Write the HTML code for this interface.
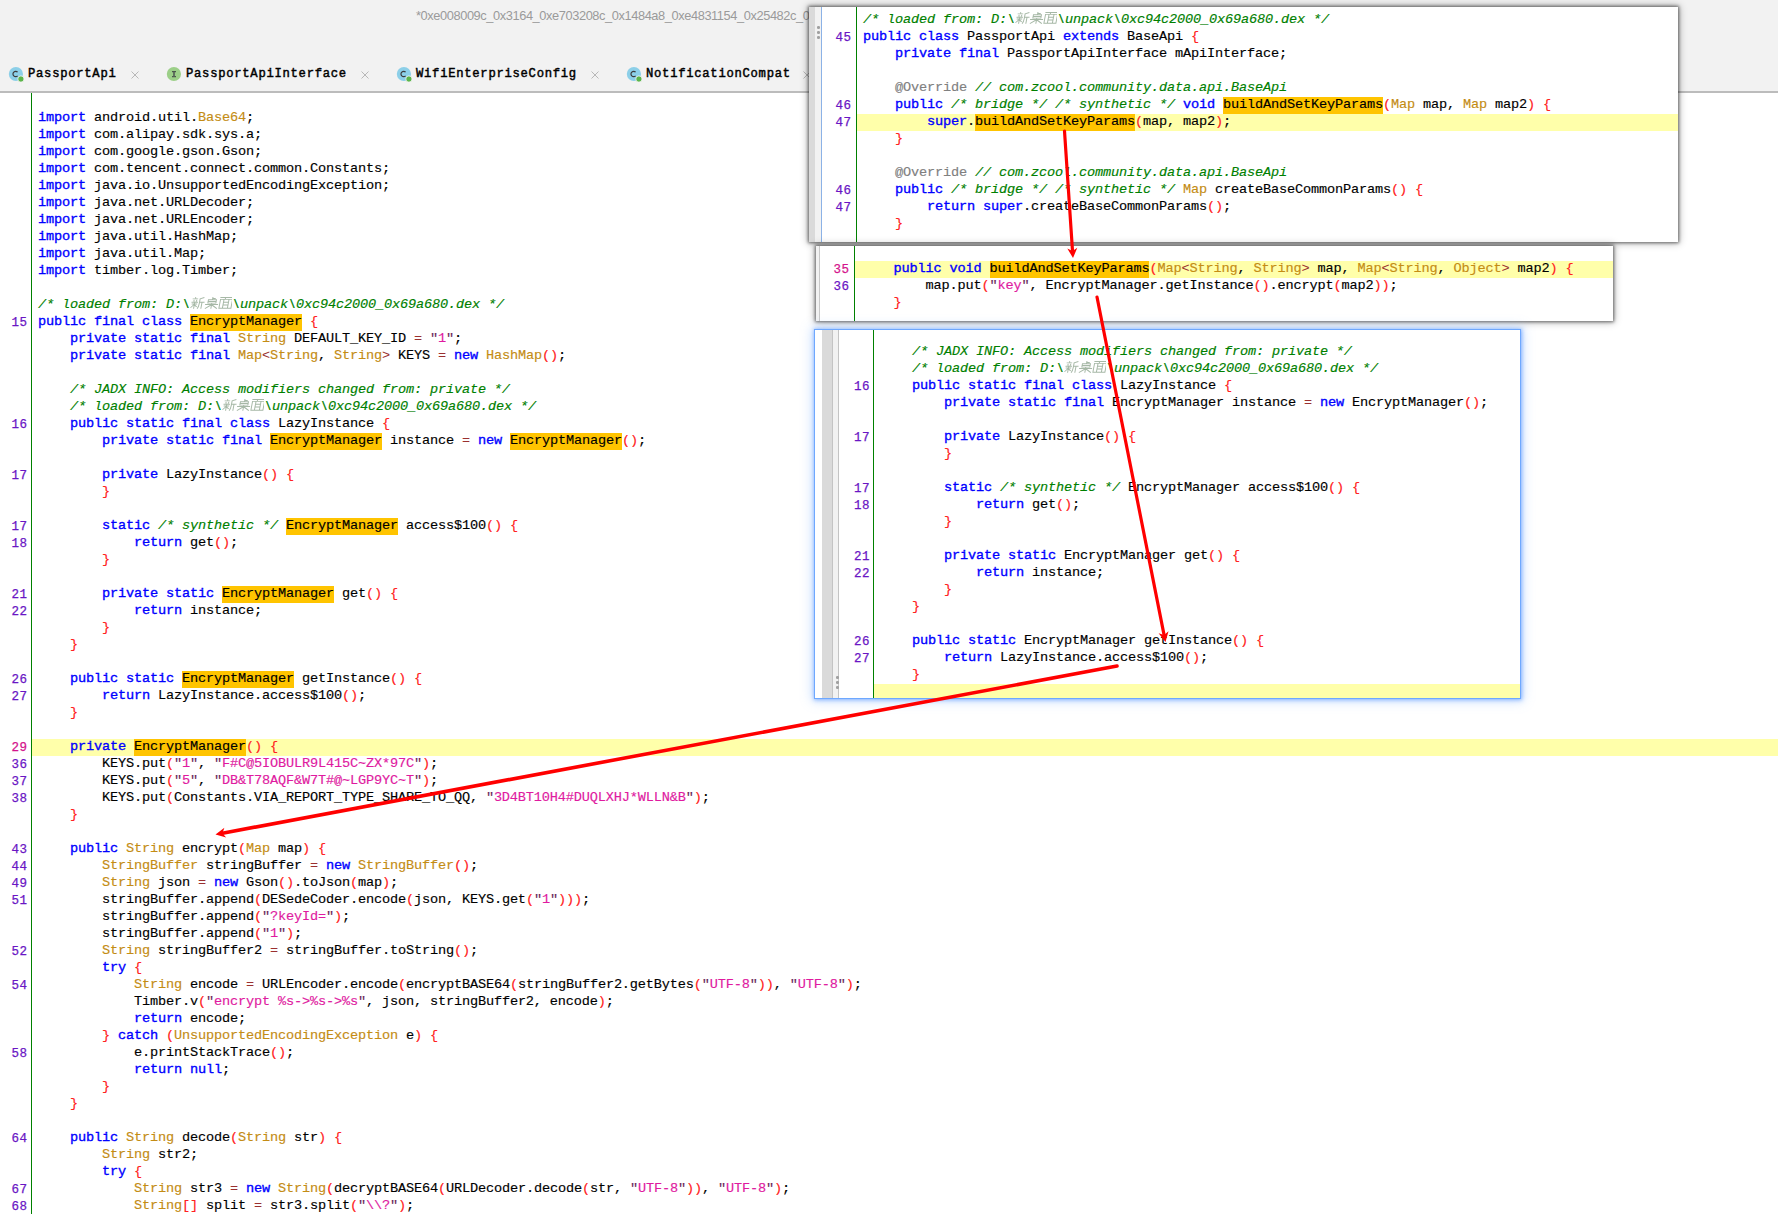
<!DOCTYPE html><html><head><meta charset="utf-8"><style>html,body{margin:0;padding:0;width:1778px;height:1214px;overflow:hidden;background:#fff;position:relative}
body{font-family:"Liberation Mono",monospace;font-size:13.6px;letter-spacing:-0.16px}
#topbar{position:absolute;left:0;top:0;width:1778px;height:91px;background:#f2f2f2}
#title{position:absolute;left:416px;top:8px;font-family:"Liberation Sans",sans-serif;font-size:12.8px;letter-spacing:-0.4px;color:#9a9a9a;white-space:nowrap;line-height:16px}
.ic{position:absolute;top:67px;width:14px;height:14px;border-radius:50%;font-family:"Liberation Sans",sans-serif;font-size:11px;line-height:14px;text-align:center;color:#404040;letter-spacing:0}
.ico{position:absolute;top:66px}
.ici{background:#9ccb8c;font-weight:bold;font-family:"Liberation Serif",serif}
.dot{position:absolute;top:76px;width:6px;height:6px;border-radius:50%;background:#5bb84c}
.tab{position:absolute;top:65.5px;font-size:12.2px;letter-spacing:0.73px;-webkit-text-stroke:0.45px #000;color:#000;line-height:17px;white-space:pre}
.x{position:absolute;top:70.5px;width:8px;height:8px;line-height:0}
#sep{position:absolute;left:0;top:91px;width:1778px;height:2px;background:#bcbcbc}
#main{position:absolute;left:0;top:0;width:1778px;height:1214px}
.code{position:absolute;white-space:pre;color:#000;-webkit-text-stroke:0.15px currentColor}
.ln{position:absolute;left:0;height:17px;line-height:17px;white-space:pre;margin-top:-1px}
.num{position:absolute;width:40px;text-align:right;line-height:17px;color:#6a16c4;-webkit-text-stroke:0.25px currentColor;margin-top:1.3px;margin-left:1.6px;font-size:12.5px;letter-spacing:0.5px}
.num.pk{color:#d4148c}
.k{color:#0000ff;-webkit-text-stroke:0.35px #0000ff}
.t{color:#c48c14}
.s{color:#e01aa0}.q{color:#6a2a5a}
.c{color:#008000;font-style:italic}
.a{color:#808080}.o{color:#9a3030;-webkit-text-stroke:0}
.b{color:#ff2020}
.h{display:inline-block;vertical-align:top;height:18px;background:linear-gradient(#ffc400,#ffc400) 0 1px/100% 17px no-repeat}
.cj{display:inline-block;width:42px;height:17px;vertical-align:top;margin-top:0}
.curline{position:absolute;height:17px;background:#ffffaa}
.gl{position:absolute;width:1px;background:#008000}
.bl{position:absolute;width:1px;background:#8cb2e6}
.pop{position:absolute;background:#fff;overflow:hidden}
.p1,.p2{box-shadow:0 0 3px 1px rgba(0,0,0,0.5),0 0 8px 1px rgba(0,0,0,0.3)}
.p3{overflow:hidden;box-shadow:0 0 0.5px 1px #6ea8ff,0 0 4px 1.5px rgba(110,165,255,0.8),0 0 11px 3px rgba(110,165,255,0.35)}
.strip1{position:absolute;background:#dadada;border-right:1px solid #c4c4c4}
.strip2{position:absolute;background:#f2f2f2;border-right:1px solid #c4c4c4}
.strip2b{position:absolute;background:#f2f2f2;border-right:1px solid #c8c8c8}
.dt{position:absolute;width:2.6px;height:2.6px;border-radius:50%;background:#a0a0a0}
#arrows{position:absolute;left:0;top:0;pointer-events:none}
</style></head><body><div id="topbar"></div>
<div id="title">*0xe008009c_0x3164_0xe703208c_0x1484a8_0xe4831154_0x25482c_0x9a3c_0x1b2</div>
<svg class="ico" style="left:8.0px" width="20" height="20"><circle cx="7.9" cy="8" r="7.1" fill="#8ccfe8"/><path d="M9.6 6.1A2.7 2.7 0 1 0 9.6 9.9" fill="none" stroke="#3c3c3c" stroke-width="1.2"/><circle cx="12.9" cy="13" r="3.1" fill="#5cb54a" stroke="#f2f2f2" stroke-width="0.8"/></svg>
<div class="tab" style="left:28px">PassportApi</div>
<div class="x" style="left:130.5px"><svg width="8" height="8"><path d="M0.5 0.5L7.5 7.5M7.5 0.5L0.5 7.5" stroke="#b8b8b8" stroke-width="1"/></svg></div>
<svg class="ico" style="left:166.0px" width="20" height="20"><circle cx="7.9" cy="8" r="7.1" fill="#9ccf88"/><path d="M6 5.6H10M6 10.6H10M8 5.6V10.6" fill="none" stroke="#4a564a" stroke-width="1.2"/><path d="M8 6V10.4" stroke="#5e6e5e" stroke-width="1.8"/></svg>
<div class="tab" style="left:186px">PassportApiInterface</div>
<div class="x" style="left:360.5px"><svg width="8" height="8"><path d="M0.5 0.5L7.5 7.5M7.5 0.5L0.5 7.5" stroke="#b8b8b8" stroke-width="1"/></svg></div>
<svg class="ico" style="left:396.0px" width="20" height="20"><circle cx="7.9" cy="8" r="7.1" fill="#8ccfe8"/><path d="M9.6 6.1A2.7 2.7 0 1 0 9.6 9.9" fill="none" stroke="#3c3c3c" stroke-width="1.2"/><circle cx="12.9" cy="13" r="3.1" fill="#5cb54a" stroke="#f2f2f2" stroke-width="0.8"/></svg>
<div class="tab" style="left:416px">WifiEnterpriseConfig</div>
<div class="x" style="left:590.5px"><svg width="8" height="8"><path d="M0.5 0.5L7.5 7.5M7.5 0.5L0.5 7.5" stroke="#b8b8b8" stroke-width="1"/></svg></div>
<svg class="ico" style="left:626.0px" width="20" height="20"><circle cx="7.9" cy="8" r="7.1" fill="#8ccfe8"/><path d="M9.6 6.1A2.7 2.7 0 1 0 9.6 9.9" fill="none" stroke="#3c3c3c" stroke-width="1.2"/><circle cx="12.9" cy="13" r="3.1" fill="#5cb54a" stroke="#f2f2f2" stroke-width="0.8"/></svg>
<div class="tab" style="left:646px">NotificationCompat</div>
<div class="x" style="left:802.5px"><svg width="8" height="8"><path d="M0.5 0.5L7.5 7.5M7.5 0.5L0.5 7.5" stroke="#b8b8b8" stroke-width="1"/></svg></div>
<div id="sep"></div>
<div id="main">
<div class="curline" style="left:32px;top:739px;width:1746px"></div>
<div class="gl" style="left:31px;top:93px;height:1121px"></div>
<div class="num" style="top:314px;left:-14px">15</div><div class="num" style="top:416px;left:-14px">16</div><div class="num" style="top:467px;left:-14px">17</div><div class="num" style="top:518px;left:-14px">17</div><div class="num" style="top:535px;left:-14px">18</div><div class="num" style="top:586px;left:-14px">21</div><div class="num" style="top:603px;left:-14px">22</div><div class="num" style="top:671px;left:-14px">26</div><div class="num" style="top:688px;left:-14px">27</div><div class="num pk" style="top:739px;left:-14px">29</div><div class="num" style="top:756px;left:-14px">36</div><div class="num" style="top:773px;left:-14px">37</div><div class="num" style="top:790px;left:-14px">38</div><div class="num" style="top:841px;left:-14px">43</div><div class="num" style="top:858px;left:-14px">44</div><div class="num" style="top:875px;left:-14px">49</div><div class="num" style="top:892px;left:-14px">51</div><div class="num" style="top:943px;left:-14px">52</div><div class="num" style="top:977px;left:-14px">54</div><div class="num" style="top:1045px;left:-14px">58</div><div class="num" style="top:1130px;left:-14px">64</div><div class="num" style="top:1181px;left:-14px">67</div><div class="num" style="top:1198px;left:-14px">68</div>
<div class="code " style="left:38px;top:0"><div class="ln" style="top:110px"><span class="k">import</span> android.util.<span class="t">Base64</span>;</div><div class="ln" style="top:127px"><span class="k">import</span> com.alipay.sdk.sys.a;</div><div class="ln" style="top:144px"><span class="k">import</span> com.google.gson.Gson;</div><div class="ln" style="top:161px"><span class="k">import</span> com.tencent.connect.common.Constants;</div><div class="ln" style="top:178px"><span class="k">import</span> java.io.UnsupportedEncodingException;</div><div class="ln" style="top:195px"><span class="k">import</span> java.net.URLDecoder;</div><div class="ln" style="top:212px"><span class="k">import</span> java.net.URLEncoder;</div><div class="ln" style="top:229px"><span class="k">import</span> java.util.HashMap;</div><div class="ln" style="top:246px"><span class="k">import</span> java.util.Map;</div><div class="ln" style="top:263px"><span class="k">import</span> timber.log.Timber;</div><div class="ln" style="top:297px"><span class="c">/* loaded from: D:\</span><svg class="cj" width="42" height="17" viewBox="0 0 42 17"><g transform="translate(2 1) scale(1 0.94) skewX(-10)" fill="none" stroke="#a6b8a6" stroke-width="1"><path d="M3.5 0.3L4.2 1.5M1 2H6.5M2.5 3L3 5M5.5 3L5 5M0.5 5.5H7M1 7.5H6.5M3.75 5.5V12.5M3.5 8L0.5 11.5M4 8.5L6.5 10.5M12.5 0.5L8.5 2V7Q8.5 10.5 7.3 12.5M8.5 5.5H13.5M11 5.5V12.5"/><path d="M21 0V3M21 1.5H24M17 3H25V6.5H17ZM17 4.75H25M14.5 8H27.5M21 6.5V12.5M20.5 8.5L15 12.3M21.5 8.5L27 12.3"/><path d="M28.5 0.5H41.5M34 0.5L33.5 2.5M29 2.5H41V12H29ZM32.5 2.5V12M37.5 2.5V12M32.5 5.5H37.5M32.5 8.5H37.5"/></g></svg><span class="c">\unpack\0xc94c2000_0x69a680.dex */</span></div><div class="ln" style="top:314px"><span class="k">public</span> <span class="k">final</span> <span class="k">class</span> <span class="h">EncryptManager</span> <span class="b">{</span></div><div class="ln" style="top:331px">    <span class="k">private</span> <span class="k">static</span> <span class="k">final</span> <span class="t">String</span> DEFAULT_KEY_ID <span class="o">=</span> <span class="s"><span class="q">&quot;</span>1<span class="q">&quot;</span></span>;</div><div class="ln" style="top:348px">    <span class="k">private</span> <span class="k">static</span> <span class="k">final</span> <span class="t">Map</span><span class="o">&lt;</span><span class="t">String</span>, <span class="t">String</span><span class="o">&gt;</span> KEYS <span class="o">=</span> <span class="k">new</span> <span class="t">HashMap</span><span class="b">(</span><span class="b">)</span>;</div><div class="ln" style="top:382px">    <span class="c">/* JADX INFO: Access modifiers changed from: private */</span></div><div class="ln" style="top:399px">    <span class="c">/* loaded from: D:\</span><svg class="cj" width="42" height="17" viewBox="0 0 42 17"><g transform="translate(2 1) scale(1 0.94) skewX(-10)" fill="none" stroke="#a6b8a6" stroke-width="1"><path d="M3.5 0.3L4.2 1.5M1 2H6.5M2.5 3L3 5M5.5 3L5 5M0.5 5.5H7M1 7.5H6.5M3.75 5.5V12.5M3.5 8L0.5 11.5M4 8.5L6.5 10.5M12.5 0.5L8.5 2V7Q8.5 10.5 7.3 12.5M8.5 5.5H13.5M11 5.5V12.5"/><path d="M21 0V3M21 1.5H24M17 3H25V6.5H17ZM17 4.75H25M14.5 8H27.5M21 6.5V12.5M20.5 8.5L15 12.3M21.5 8.5L27 12.3"/><path d="M28.5 0.5H41.5M34 0.5L33.5 2.5M29 2.5H41V12H29ZM32.5 2.5V12M37.5 2.5V12M32.5 5.5H37.5M32.5 8.5H37.5"/></g></svg><span class="c">\unpack\0xc94c2000_0x69a680.dex */</span></div><div class="ln" style="top:416px">    <span class="k">public</span> <span class="k">static</span> <span class="k">final</span> <span class="k">class</span> LazyInstance <span class="b">{</span></div><div class="ln" style="top:433px">        <span class="k">private</span> <span class="k">static</span> <span class="k">final</span> <span class="h">EncryptManager</span> instance <span class="o">=</span> <span class="k">new</span> <span class="h">EncryptManager</span><span class="b">(</span><span class="b">)</span>;</div><div class="ln" style="top:467px">        <span class="k">private</span> LazyInstance<span class="b">(</span><span class="b">)</span> <span class="b">{</span></div><div class="ln" style="top:484px">        <span class="b">}</span></div><div class="ln" style="top:518px">        <span class="k">static</span> <span class="c">/* synthetic */</span> <span class="h">EncryptManager</span> access$100<span class="b">(</span><span class="b">)</span> <span class="b">{</span></div><div class="ln" style="top:535px">            <span class="k">return</span> get<span class="b">(</span><span class="b">)</span>;</div><div class="ln" style="top:552px">        <span class="b">}</span></div><div class="ln" style="top:586px">        <span class="k">private</span> <span class="k">static</span> <span class="h">EncryptManager</span> get<span class="b">(</span><span class="b">)</span> <span class="b">{</span></div><div class="ln" style="top:603px">            <span class="k">return</span> instance;</div><div class="ln" style="top:620px">        <span class="b">}</span></div><div class="ln" style="top:637px">    <span class="b">}</span></div><div class="ln" style="top:671px">    <span class="k">public</span> <span class="k">static</span> <span class="h">EncryptManager</span> getInstance<span class="b">(</span><span class="b">)</span> <span class="b">{</span></div><div class="ln" style="top:688px">        <span class="k">return</span> LazyInstance.access$100<span class="b">(</span><span class="b">)</span>;</div><div class="ln" style="top:705px">    <span class="b">}</span></div><div class="ln" style="top:739px">    <span class="k">private</span> <span class="h">EncryptManager</span><span class="b">(</span><span class="b">)</span> <span class="b">{</span></div><div class="ln" style="top:756px">        KEYS.put<span class="b">(</span><span class="s"><span class="q">&quot;</span>1<span class="q">&quot;</span></span>, <span class="s"><span class="q">&quot;</span>F#C@5IOBULR9L415C~ZX*97C<span class="q">&quot;</span></span><span class="b">)</span>;</div><div class="ln" style="top:773px">        KEYS.put<span class="b">(</span><span class="s"><span class="q">&quot;</span>5<span class="q">&quot;</span></span>, <span class="s"><span class="q">&quot;</span>DB&amp;T78AQF&amp;W7T#@~LGP9YC~T<span class="q">&quot;</span></span><span class="b">)</span>;</div><div class="ln" style="top:790px">        KEYS.put<span class="b">(</span>Constants.VIA_REPORT_TYPE_SHARE_TO_QQ, <span class="s"><span class="q">&quot;</span>3D4BT10H4#DUQLXHJ*WLLN&amp;B<span class="q">&quot;</span></span><span class="b">)</span>;</div><div class="ln" style="top:807px">    <span class="b">}</span></div><div class="ln" style="top:841px">    <span class="k">public</span> <span class="t">String</span> encrypt<span class="b">(</span><span class="t">Map</span> map<span class="b">)</span> <span class="b">{</span></div><div class="ln" style="top:858px">        <span class="t">StringBuffer</span> stringBuffer <span class="o">=</span> <span class="k">new</span> <span class="t">StringBuffer</span><span class="b">(</span><span class="b">)</span>;</div><div class="ln" style="top:875px">        <span class="t">String</span> json <span class="o">=</span> <span class="k">new</span> Gson<span class="b">(</span><span class="b">)</span>.toJson<span class="b">(</span>map<span class="b">)</span>;</div><div class="ln" style="top:892px">        stringBuffer.append<span class="b">(</span>DESedeCoder.encode<span class="b">(</span>json, KEYS.get<span class="b">(</span><span class="s"><span class="q">&quot;</span>1<span class="q">&quot;</span></span><span class="b">)</span><span class="b">)</span><span class="b">)</span>;</div><div class="ln" style="top:909px">        stringBuffer.append<span class="b">(</span><span class="s"><span class="q">&quot;</span>?keyId=<span class="q">&quot;</span></span><span class="b">)</span>;</div><div class="ln" style="top:926px">        stringBuffer.append<span class="b">(</span><span class="s"><span class="q">&quot;</span>1<span class="q">&quot;</span></span><span class="b">)</span>;</div><div class="ln" style="top:943px">        <span class="t">String</span> stringBuffer2 <span class="o">=</span> stringBuffer.toString<span class="b">(</span><span class="b">)</span>;</div><div class="ln" style="top:960px">        <span class="k">try</span> <span class="b">{</span></div><div class="ln" style="top:977px">            <span class="t">String</span> encode <span class="o">=</span> URLEncoder.encode<span class="b">(</span>encryptBASE64<span class="b">(</span>stringBuffer2.getBytes<span class="b">(</span><span class="s"><span class="q">&quot;</span>UTF-8<span class="q">&quot;</span></span><span class="b">)</span><span class="b">)</span>, <span class="s"><span class="q">&quot;</span>UTF-8<span class="q">&quot;</span></span><span class="b">)</span>;</div><div class="ln" style="top:994px">            Timber.v<span class="b">(</span><span class="s"><span class="q">&quot;</span>encrypt %s-&gt;%s-&gt;%s<span class="q">&quot;</span></span>, json, stringBuffer2, encode<span class="b">)</span>;</div><div class="ln" style="top:1011px">            <span class="k">return</span> encode;</div><div class="ln" style="top:1028px">        <span class="b">}</span> <span class="k">catch</span> <span class="b">(</span><span class="t">UnsupportedEncodingException</span> e<span class="b">)</span> <span class="b">{</span></div><div class="ln" style="top:1045px">            e.printStackTrace<span class="b">(</span><span class="b">)</span>;</div><div class="ln" style="top:1062px">            <span class="k">return</span> <span class="k">null</span>;</div><div class="ln" style="top:1079px">        <span class="b">}</span></div><div class="ln" style="top:1096px">    <span class="b">}</span></div><div class="ln" style="top:1130px">    <span class="k">public</span> <span class="t">String</span> decode<span class="b">(</span><span class="t">String</span> str<span class="b">)</span> <span class="b">{</span></div><div class="ln" style="top:1147px">        <span class="t">String</span> str2;</div><div class="ln" style="top:1164px">        <span class="k">try</span> <span class="b">{</span></div><div class="ln" style="top:1181px">            <span class="t">String</span> str3 <span class="o">=</span> <span class="k">new</span> <span class="t">String</span><span class="b">(</span>decryptBASE64<span class="b">(</span>URLDecoder.decode<span class="b">(</span>str, <span class="s"><span class="q">&quot;</span>UTF-8<span class="q">&quot;</span></span><span class="b">)</span><span class="b">)</span>, <span class="s"><span class="q">&quot;</span>UTF-8<span class="q">&quot;</span></span><span class="b">)</span>;</div><div class="ln" style="top:1198px">            <span class="t">String</span><span class="b">[</span><span class="b">]</span> split <span class="o">=</span> str3.split<span class="b">(</span><span class="s"><span class="q">&quot;</span>\\?<span class="q">&quot;</span></span><span class="b">)</span>;</div></div>
</div>
<div class="pop p1" style="left:809px;top:7px;width:869px;height:235px">
<div class="strip1" style="left:0;top:0;width:6px;height:235px"></div>
<div class="strip2" style="left:6px;top:0;width:6px;height:235px"></div>
<div class="dt" style="left:8.0px;top:19.0px"></div><div class="dt" style="left:8.0px;top:24.0px"></div><div class="dt" style="left:8.0px;top:29.0px"></div>
<div class="bl" style="left:12px;top:0;height:235px"></div>
<div class="curline" style="left:48px;top:107px;width:821px"></div>
<div class="gl" style="left:47px;top:0;height:235px"></div>
<div class="num" style="top:22px;left:1px">45</div><div class="num" style="top:90px;left:1px">46</div><div class="num" style="top:107px;left:1px">47</div><div class="num" style="top:175px;left:1px">46</div><div class="num" style="top:192px;left:1px">47</div>
<div class="code " style="left:54px;top:0"><div class="ln" style="top:5px"><span class="c">/* loaded from: D:\</span><svg class="cj" width="42" height="17" viewBox="0 0 42 17"><g transform="translate(2 1) scale(1 0.94) skewX(-10)" fill="none" stroke="#a6b8a6" stroke-width="1"><path d="M3.5 0.3L4.2 1.5M1 2H6.5M2.5 3L3 5M5.5 3L5 5M0.5 5.5H7M1 7.5H6.5M3.75 5.5V12.5M3.5 8L0.5 11.5M4 8.5L6.5 10.5M12.5 0.5L8.5 2V7Q8.5 10.5 7.3 12.5M8.5 5.5H13.5M11 5.5V12.5"/><path d="M21 0V3M21 1.5H24M17 3H25V6.5H17ZM17 4.75H25M14.5 8H27.5M21 6.5V12.5M20.5 8.5L15 12.3M21.5 8.5L27 12.3"/><path d="M28.5 0.5H41.5M34 0.5L33.5 2.5M29 2.5H41V12H29ZM32.5 2.5V12M37.5 2.5V12M32.5 5.5H37.5M32.5 8.5H37.5"/></g></svg><span class="c">\unpack\0xc94c2000_0x69a680.dex */</span></div><div class="ln" style="top:22px"><span class="k">public</span> <span class="k">class</span> PassportApi <span class="k">extends</span> BaseApi <span class="b">{</span></div><div class="ln" style="top:39px">    <span class="k">private</span> <span class="k">final</span> PassportApiInterface mApiInterface;</div><div class="ln" style="top:73px">    <span class="a">@Override</span> <span class="c">// com.zcool.community.data.api.BaseApi</span></div><div class="ln" style="top:90px">    <span class="k">public</span> <span class="c">/* bridge */</span> <span class="c">/* synthetic */</span> <span class="k">void</span> <span class="h">buildAndSetKeyParams</span><span class="b">(</span><span class="t">Map</span> map, <span class="t">Map</span> map2<span class="b">)</span> <span class="b">{</span></div><div class="ln" style="top:107px">        <span class="k">super</span>.<span class="h">buildAndSetKeyParams</span><span class="b">(</span>map, map2<span class="b">)</span>;</div><div class="ln" style="top:124px">    <span class="b">}</span></div><div class="ln" style="top:158px">    <span class="a">@Override</span> <span class="c">// com.zcool.community.data.api.BaseApi</span></div><div class="ln" style="top:175px">    <span class="k">public</span> <span class="c">/* bridge */</span> <span class="c">/* synthetic */</span> <span class="t">Map</span> createBaseCommonParams<span class="b">(</span><span class="b">)</span> <span class="b">{</span></div><div class="ln" style="top:192px">        <span class="k">return</span> <span class="k">super</span>.createBaseCommonParams<span class="b">(</span><span class="b">)</span>;</div><div class="ln" style="top:209px">    <span class="b">}</span></div></div>
</div>
<div class="pop p2" style="left:816px;top:246px;width:797px;height:75px">
<div class="strip2b" style="left:0;top:0;width:3px;height:75px"></div>
<div class="curline" style="left:39px;top:15px;width:758px"></div>
<div class="gl" style="left:38px;top:0;height:75px"></div>
<div class="num pk" style="top:15px;left:-8px">35</div><div class="num" style="top:32px;left:-8px">36</div>
<div class="code " style="left:45.5px;top:0"><div class="ln" style="top:15px">    <span class="k">public</span> <span class="k">void</span> <span class="h">buildAndSetKeyParams</span><span class="b">(</span><span class="t">Map</span><span class="o">&lt;</span><span class="t">String</span>, <span class="t">String</span><span class="o">&gt;</span> map, <span class="t">Map</span><span class="o">&lt;</span><span class="t">String</span>, <span class="t">Object</span><span class="o">&gt;</span> map2<span class="b">)</span> <span class="b">{</span></div><div class="ln" style="top:32px">        map.put<span class="b">(</span><span class="s"><span class="q">&quot;</span>key<span class="q">&quot;</span></span>, EncryptManager.getInstance<span class="b">(</span><span class="b">)</span>.encrypt<span class="b">(</span>map2<span class="b">)</span><span class="b">)</span>;</div><div class="ln" style="top:49px">    <span class="b">}</span></div></div>
</div>
<div class="pop p3" style="left:815px;top:330px;width:705px;height:368px"><div style="position:absolute;left:-2px;top:-2px;width:708px;height:370px">
<div class="strip1" style="left:9px;top:0;width:10px;height:370px"></div>
<div class="strip2" style="left:20px;top:0;width:5px;height:370px"></div>
<div class="dt" style="left:23.3px;top:348.2px"></div><div class="dt" style="left:23.3px;top:353.2px"></div><div class="dt" style="left:23.3px;top:358.2px"></div>
<div class="curline" style="left:61px;top:356px;width:647px"></div>
<div class="gl" style="left:60px;top:0;height:370px"></div>
<div class="num" style="top:50px;left:15.5px">16</div><div class="num" style="top:101px;left:15.5px">17</div><div class="num" style="top:152px;left:15.5px">17</div><div class="num" style="top:169px;left:15.5px">18</div><div class="num" style="top:220px;left:15.5px">21</div><div class="num" style="top:237px;left:15.5px">22</div><div class="num" style="top:305px;left:15.5px">26</div><div class="num" style="top:322px;left:15.5px">27</div>
<div class="code " style="left:67px;top:0"><div class="ln" style="top:16px">    <span class="c">/* JADX INFO: Access modifiers changed from: private */</span></div><div class="ln" style="top:33px">    <span class="c">/* loaded from: D:\</span><svg class="cj" width="42" height="17" viewBox="0 0 42 17"><g transform="translate(2 1) scale(1 0.94) skewX(-10)" fill="none" stroke="#a6b8a6" stroke-width="1"><path d="M3.5 0.3L4.2 1.5M1 2H6.5M2.5 3L3 5M5.5 3L5 5M0.5 5.5H7M1 7.5H6.5M3.75 5.5V12.5M3.5 8L0.5 11.5M4 8.5L6.5 10.5M12.5 0.5L8.5 2V7Q8.5 10.5 7.3 12.5M8.5 5.5H13.5M11 5.5V12.5"/><path d="M21 0V3M21 1.5H24M17 3H25V6.5H17ZM17 4.75H25M14.5 8H27.5M21 6.5V12.5M20.5 8.5L15 12.3M21.5 8.5L27 12.3"/><path d="M28.5 0.5H41.5M34 0.5L33.5 2.5M29 2.5H41V12H29ZM32.5 2.5V12M37.5 2.5V12M32.5 5.5H37.5M32.5 8.5H37.5"/></g></svg><span class="c">\unpack\0xc94c2000_0x69a680.dex */</span></div><div class="ln" style="top:50px">    <span class="k">public</span> <span class="k">static</span> <span class="k">final</span> <span class="k">class</span> LazyInstance <span class="b">{</span></div><div class="ln" style="top:67px">        <span class="k">private</span> <span class="k">static</span> <span class="k">final</span> EncryptManager instance <span class="o">=</span> <span class="k">new</span> EncryptManager<span class="b">(</span><span class="b">)</span>;</div><div class="ln" style="top:101px">        <span class="k">private</span> LazyInstance<span class="b">(</span><span class="b">)</span> <span class="b">{</span></div><div class="ln" style="top:118px">        <span class="b">}</span></div><div class="ln" style="top:152px">        <span class="k">static</span> <span class="c">/* synthetic */</span> EncryptManager access$100<span class="b">(</span><span class="b">)</span> <span class="b">{</span></div><div class="ln" style="top:169px">            <span class="k">return</span> get<span class="b">(</span><span class="b">)</span>;</div><div class="ln" style="top:186px">        <span class="b">}</span></div><div class="ln" style="top:220px">        <span class="k">private</span> <span class="k">static</span> EncryptManager get<span class="b">(</span><span class="b">)</span> <span class="b">{</span></div><div class="ln" style="top:237px">            <span class="k">return</span> instance;</div><div class="ln" style="top:254px">        <span class="b">}</span></div><div class="ln" style="top:271px">    <span class="b">}</span></div><div class="ln" style="top:305px">    <span class="k">public</span> <span class="k">static</span> EncryptManager getInstance<span class="b">(</span><span class="b">)</span> <span class="b">{</span></div><div class="ln" style="top:322px">        <span class="k">return</span> LazyInstance.access$100<span class="b">(</span><span class="b">)</span>;</div><div class="ln" style="top:339px">    <span class="b">}</span></div></div>
</div></div>
<svg id="arrows" width="1778" height="1214"><line x1="1064.5" y1="131.0" x2="1072.5" y2="251.0" stroke="#ff0000" stroke-width="3.2" stroke-linecap="round"/><polygon points="1073.0,258.0 1067.3,248.4 1072.5,251.0 1077.3,247.7" fill="#ff0000"/><line x1="1097.0" y1="297.0" x2="1164.1" y2="635.1" stroke="#ff0000" stroke-width="3.2" stroke-linecap="round"/><polygon points="1165.5,642.0 1158.6,633.2 1164.1,635.1 1168.5,631.2" fill="#ff0000"/><line x1="1117.0" y1="666.0" x2="222.4" y2="833.2" stroke="#ff0000" stroke-width="3.6" stroke-linecap="round"/><polygon points="215.5,834.5 224.4,827.7 222.4,833.2 226.2,837.6" fill="#ff0000"/></svg></body></html>
